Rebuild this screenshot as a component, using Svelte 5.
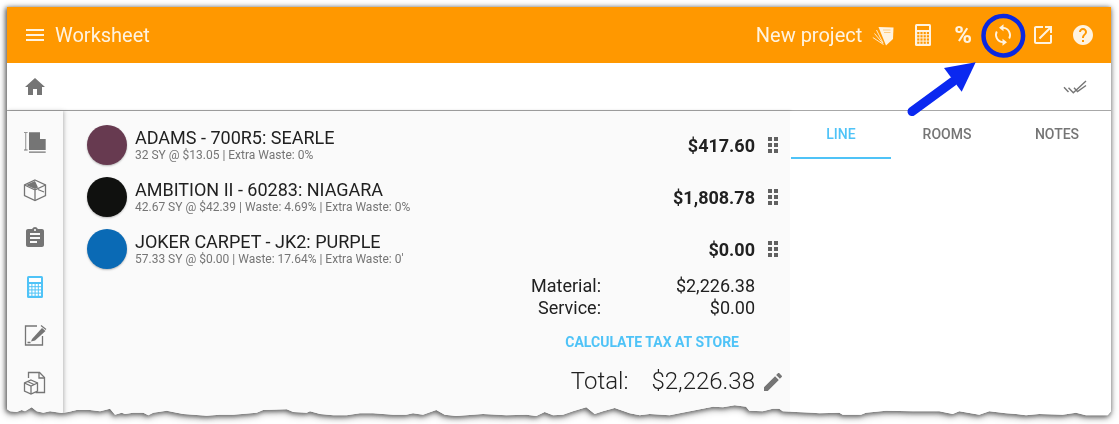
<script>
  let items = [
    { name: "ADAMS - 700R5: SEARLE", info: "32 SY @ $13.05 | Extra Waste: 0%", price: "$417.60", color: "#673a50" },
    { name: "AMBITION II - 60283: NIAGARA", info: "42.67 SY @ $42.39 | Waste: 4.69% | Extra Waste: 0%", price: "$1,808.78", color: "#10110f" },
    { name: "JOKER CARPET - JK2: PURPLE", info: "57.33 SY @ $0.00 | Waste: 17.64% | Extra Waste: 0'", price: "$0.00", color: "#0a6ab5" }
  ];

  // torn bottom edge, traced from the screenshot: [x, y] pairs per strip
  let strips = [
    [0, [20,33,30,40,50,42,65,36,75,40,95,28,110,40,130,44,150,40,165,42,185,45,205,42,230,36,270,36,300,40,330,32,345,50,365,44,375,48,400,44,430,44,445,52,460,44,500,38,530,44,550,48,580,50,620,53,660,50,700,50,770,44,790,36,860,34,880,42,920,44,930,40,960,48,1000,52,1040,52,1080,46,1119,46]],
    [373, [60,50,100,50,120,46,150,50,190,36,215,50,250,54,330,48,400,52,460,50,490,54,515,42,540,52,570,50,600,40,640,28,665,48,690,40,725,30,770,46,800,52,830,48,890,52,920,46,970,36,1020,26,1050,28,1085,22,1119,26]],
    [746, [10,38,50,40,80,32,100,32,110,40,150,42,200,44,220,46,280,44,290,50,345,50,360,44,420,38,500,40,580,40,620,48,640,40,700,50,730,40,780,46,810,48,840,52,880,48,950,50,990,44,1020,52,1085,52,1095,40]]
  ];

  function tornEdge() {
    let pts = ["0 0", "1104px 0"];
    let edge = [];
    for (const [off, p] of strips) {
      for (let i = 0; i < p.length; i += 2) {
        edge.push(`${(off + p[i] / 3 - 7).toFixed(1)}px ${(398 + p[i + 1] / 3 - 7).toFixed(1)}px`);
      }
    }
    return "polygon(" + pts.concat(edge.reverse()).join(",") + ")";
  }
</script>

{#snippet calc(bg, fg)}
  <svg width="16" height="22" viewBox="0 0 16 22">
    <rect width="16" height="22" rx="1.5" fill={bg} />
    <rect x="2" y="2" width="12" height="4" fill={fg} />
    {#each [8, 11.2, 14.4, 17.6] as y}
      {#each [2.2, 5.4, 8.6, 11.8] as x}
        <rect {x} {y} width="2.2" height="2.2" fill={fg} />
      {/each}
    {/each}
  </svg>
{/snippet}

<div class="page">
  <div class="shadow">
    <div class="shell" style="clip-path: {tornEdge()}">
      <header class="top">
        <svg class="burger" width="24" height="24" viewBox="0 0 24 24"><path d="M3 18h18v-2H3v2zm0-5h18v-2H3v2zm0-7v2h18V6H3z" /></svg>
        <span class="title">Worksheet</span>
        <span class="project">New project</span>
        <svg class="ico fan" width="22" height="21" viewBox="0 0 22 21">
          <path d="M6.500 2 21.500 2.500 21 14 14 20.500z" />
          <path d="M11 5h7.500M12 7.500h6.500" stroke="#ffcc80" stroke-width="1" />
          <path d="M4.500 5 11 18M2.500 8.500 11 18.500M.8 12.500 11.500 19.500" stroke="#fff3e0" stroke-width=".9" fill="none" />
        </svg>
        <span class="ico calc">{@render calc("#fff3e0", "#ff9800")}</span>
        <span class="ico pct">%</span>
        <svg class="ico sync" width="24" height="24" viewBox="0 0 24 24">
          <path d="M18.200 15.500A7.300 7.300 0 0 0 12 4.800M5.800 8.500A7.300 7.300 0 0 0 12 19.200" fill="none" stroke="#fff3e0" stroke-width="1.800" />
          <path d="M12.500 1.300 8 4.800l4.500 3.500zM11.500 15.700 16 19.200l-4.500 3.500z" />
        </svg>
        <svg class="ico open" width="24" height="24" viewBox="0 0 24 24"><path d="M19 19H5V5h7V3H5c-1.11 0-2 .9-2 2v14c0 1.1.89 2 2 2h14c1.1 0 2-.9 2-2v-7h-2v7zM14 3v2h3.59l-9.83 9.83 1.41 1.41L19 6.41V10h2V3h-7z" /></svg>
        <svg class="ico help" width="24" height="24" viewBox="0 0 24 24"><path d="M12 2C6.48 2 2 6.48 2 12s4.48 10 10 10 10-4.48 10-10S17.52 2 12 2zm1 17h-2v-2h2v2zm2.07-7.75l-.9.92C13.45 12.9 13 13.5 13 15h-2v-.5c0-1.1.45-2.1 1.17-2.83l1.24-1.26c.37-.36.59-.86.59-1.41 0-1.1-.9-2-2-2s-2 .9-2 2H8c0-2.21 1.79-4 4-4s4 1.79 4 4c0 .88-.36 1.68-.93 2.25z" /></svg>
      </header>

      <div class="crumbs">
        <svg width="24" height="24" viewBox="0 0 24 24" fill="#757575"><path d="M10 20v-6h4v6h5v-8h3L12 3 2 12h3v8z" /></svg>
        <svg class="checks" width="24" height="16" viewBox="0 0 24 16" fill="none" stroke="#757575" stroke-width="1.400">
          <path d="M1 8.300 5.500 13M5.500 8.800 10.300 13.700 23 2M11 8.800 14.500 12.500 23 6.500" />
        </svg>
      </div>

      <div class="body">
        <nav class="side">
          <svg width="24" height="24" viewBox="0 0 24 24" fill="#757575">
            <path d="M6 2.300h11V9h5.700v11H6z" />
            <path d="M1 2.300h3.600v.8h-1.400v16.500h1.400v.8H1v-.8h1.400V3.100H1zM6 21.500h16.700v1.300H6z" />
          </svg>
          <svg width="24" height="24" viewBox="0 0 24 24" fill="none" stroke="#757575" stroke-width="1.300">
            <path d="M12 2 22.500 7v10.500L12 22.500 1.500 17.500V7z" />
            <path d="M12 22.500V12l10.500-5M12 12 1.500 7" />
            <path d="M12 3 3 7 12 11l3-1.500z" fill="#757575" stroke="none" />
            <path d="M15 11.500l6 2.500" />
          </svg>
          <svg width="24" height="24" viewBox="0 0 24 24" fill="#757575"><path d="M19 3h-4.18C14.4 1.84 13.3 1 12 1c-1.3 0-2.4.84-2.82 2H5c-1.1 0-2 .9-2 2v14c0 1.1.9 2 2 2h14c1.1 0 2-.9 2-2V5c0-1.1-.9-2-2-2zm-7 0c.55 0 1 .45 1 1s-.45 1-1 1-1-.45-1-1 .45-1 1-1zm2 14H7v-2h7v2zm3-4H7v-2h10v2zm0-4H7V7h10v2z" /></svg>
          <span class="slot">{@render calc("#4fc3f7", "#fff")}</span>
          <svg width="24" height="24" viewBox="0 0 24 24" fill="none" stroke="#757575" stroke-width="1.300">
            <path d="M14 3H2.500v19h17V13" />
            <path d="M9 16 19 5l3.500 3L12 17.500 8 18.500z" fill="#757575" stroke="none" />
            <path d="M18 2.500l5 4" />
            <path d="M4.500 19.500h3" />
          </svg>
          <svg width="24" height="24" viewBox="0 0 24 24" fill="none" stroke="#757575" stroke-width="1.300">
            <path d="M5.500 7V1.500h11l5 5V21.500h-9" />
            <path d="M16 1.500v5.500h5.500" />
            <path d="M8 9 14.500 12v8L8 23 1.500 20v-8z" fill="#fafafa" />
            <path d="M1.500 12 8 15l6.500-3M8 15v8M4.500 10.500 11 13.500" />
          </svg>
        </nav>

        <main class="sheet">
          {#each items as item}
            <div class="row">
              <span class="swatch" style="background: {item.color}"></span>
              <div class="text">
                <div class="name">{item.name}</div>
                <div class="info">{item.info}</div>
              </div>
              <span class="price">{item.price}</span>
              <svg class="grip" width="12" height="16" viewBox="0 0 12 16" fill="#616161">
                {#each [0, 6, 12] as y}
                  <rect x="1" {y} width="4" height="4" />
                  <rect x="7" {y} width="4" height="4" />
                {/each}
              </svg>
            </div>
          {/each}

          <div class="sum"><span>Material:</span><b>$2,226.38</b></div>
          <div class="sum"><span>Service:</span><b>$0.00</b></div>
          <div class="tax">CALCULATE TAX AT STORE</div>
          <div class="total">
            <span>Total:</span><b>$2,226.38</b>
            <svg width="24" height="24" viewBox="0 0 24 24" fill="#757575"><path d="M3 17.25V21h3.750L17.810 9.940l-3.750-3.750L3 17.250zM20.710 7.040c.39-.39.39-1.020 0-1.410l-2.340-2.340c-.39-.39-1.020-.39-1.410 0l-1.830 1.830 3.750 3.750 1.830-1.830z" /></svg>
          </div>
        </main>

        <aside class="panel">
          <div class="tabs">
            <span class="tab active">LINE</span>
            <span class="tab rooms">ROOMS</span>
            <span class="tab notes">NOTES</span>
          </div>
        </aside>
      </div>
    </div>
  </div>

  <svg class="callout" width="1119" height="424" viewBox="0 0 1119 424">
    <circle cx="1003.300" cy="35.700" r="19.800" fill="none" stroke="#0a28e0" stroke-width="4.500" />
    <path d="M912 111.500 953 81.500" stroke="#0a28f0" stroke-width="9" stroke-linecap="round" />
    <polygon points="975.700,62.300 944,68 961.700,91.700" fill="#0a28f0" />
  </svg>
</div>

<style>
  :global(body) {
    background: #fff;
    overflow: hidden;
  }
  .page {
    position: relative;
    width: 1119px;
    height: 424px;
    padding: 7px 8px 0 7px;
    box-sizing: border-box;
    font-family: Roboto, "Liberation Sans", sans-serif;
    color: #212121;
  }
  .shadow {
    filter: drop-shadow(-1px 1px 2px #666) drop-shadow(0 1px 3px #999);
  }
  .shell {
    width: 1104px;
    height: 417px;
    background: #fff;
    display: flex;
    flex-direction: column;
  }
  .top {
    height: 56px;
    flex: none;
    background: #ff9800;
    display: flex;
    align-items: center;
    padding: 0 16px;
    color: #fff3e0;
    fill: #fff3e0;
    font-size: 20px;
  }
  .burger {
    margin-right: 8px;
  }
  .title {
    flex: 1;
  }
  .ico {
    margin-left: 16px;
    display: block;
  }
  .project {
    margin-right: -6px;
  }
  .calc {
    margin-left: 21px;
    height: 22px;
  }
  .pct {
    margin-left: 23px;
    font-weight: 700;
    font-size: 24px;
  }
  .sync {
    margin-left: 19px;
  }
  .crumbs {
    height: 48px;
    box-sizing: border-box;
    flex: none;
    border-bottom: 1.500px solid #a8a8a8;
    display: flex;
    align-items: center;
    justify-content: space-between;
    padding: 0 24px 0 16px;
  }
  .body {
    flex: 1;
    display: flex;
    min-height: 0;
  }
  .side {
    width: 56px;
    flex: none;
    box-shadow: 1px 0 4px #0004;
    display: flex;
    flex-direction: column;
    align-items: center;
    padding-top: 19px;
    gap: 24.200px;
    position: relative;
    z-index: 1;
    background: #fafafa;
  }
  .slot {
    height: 24px;
    display: flex;
    align-items: center;
  }
  .sheet {
    width: 727px;
    flex: none;
    background: #fafafa;
    padding: 8px 35px 0 24px;
    box-sizing: border-box;
    box-shadow: 1px 0 3px #0003;
    position: relative;
  }
  .row {
    height: 52px;
    display: flex;
    align-items: center;
    position: relative;
  }
  .swatch {
    width: 40px;
    height: 40px;
    border-radius: 50%;
    box-shadow: 0 1px 2px #0004;
    flex: none;
    margin-right: 8px;
  }
  .text {
    flex: 1;
  }
  .name {
    font-size: 18px;
    line-height: 20px;
  }
  .info {
    font-size: 12px;
    line-height: 15px;
    color: #757575;
  }
  .price {
    font-size: 18px;
    font-weight: 700;
  }
  .grip {
    position: absolute;
    left: 680px;
    top: 18px;
  }
  .sum {
    display: flex;
    justify-content: flex-end;
    font-size: 18px;
    line-height: 22px;
  }
  .sum span {
    width: 100px;
    text-align: right;
  }
  .sum b {
    width: 154px;
    text-align: right;
    font-weight: 400;
  }
  .tax {
    margin-top: 11px;
    line-height: 24px;
    font-size: 14px;
    font-weight: 700;
    color: #4fc3f7;
    text-align: right;
    margin-right: 16px;
  }
  .total {
    display: flex;
    justify-content: flex-end;
    align-items: center;
    font-size: 24px;
    font-weight: 300;
    margin-top: 12px;
    line-height: 30px;
    position: relative;
  }
  .total b {
    font-weight: 300;
    margin-left: 23px;
  }
  .total svg {
    position: absolute;
    right: -30px;
    top: 4px;
  }
  .panel {
    flex: 1;
    background: #fff;
    position: relative;
  }
  .tabs {
    display: flex;
    height: 48px;
    padding-left: 1px;
  }
  .tab {
    width: 100px;
    box-sizing: border-box;
    text-align: center;
    font-size: 14px;
    font-weight: 500;
    line-height: 46px;
    color: #757575;
  }
  .rooms {
    width: 112px;
  }
  .notes {
    width: 108px;
  }
  .active {
    color: #4fc3f7;
    border-bottom: 2px solid #4fc3f7;
  }
  .callout {
    position: absolute;
    left: 0;
    top: 0;
    pointer-events: none;
  }
</style>
